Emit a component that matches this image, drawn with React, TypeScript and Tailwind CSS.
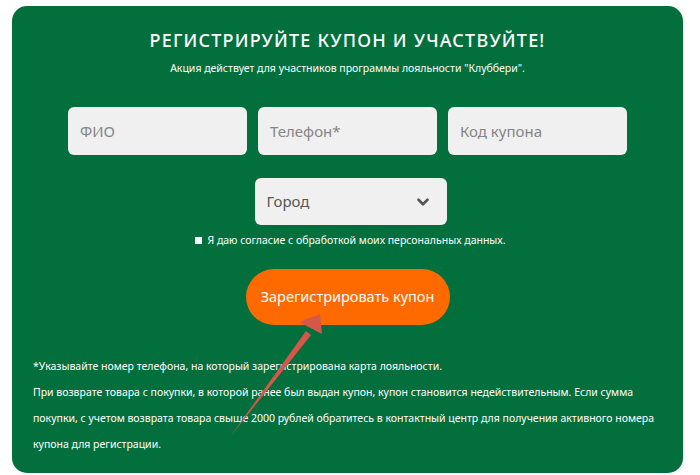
import { ChevronDown } from 'lucide-react';

const fields = ['ФИО', 'Телефон*', 'Код купона'];

export default function App() {
  return (
    <div className="w-[700px] h-[475px] bg-white px-3 pt-[6px] font-['Noto_Sans',sans-serif] relative overflow-hidden">
      <div className="bg-[#026f3d] rounded-[15px] min-h-[463px] w-[671px] flex flex-col items-center pt-[21px] pb-4 text-white">
        <h1 className="text-[18px] font-medium tracking-[1.2px] leading-[26px]">РЕГИСТРИРУЙТЕ КУПОН И УЧАСТВУЙТЕ!</h1>
        <p className="text-[10.5px] mt-[8px] leading-[14px]">Акция действует для участников программы лояльности "Клуббери".</p>

        <div className="flex gap-[11px] mt-[32px]">
          {fields.map(f => (
            <div
              key={f}
              className="w-[179px] h-[48px] bg-[#f0f0f0] rounded-[6px] flex items-center pl-[12px] text-[15px] text-[#858585]"
            >
              {f}
            </div>
          ))}
        </div>

        <div className="w-[192px] h-[47px] bg-[#f0f0f0] rounded-[6px] mt-[23px] ml-[6px] flex items-center justify-between pl-[12px] pr-[15px] text-[15px] text-[#555]">
          <span>Город</span>
          <ChevronDown size={18} strokeWidth={3.5} className="text-[#555]" />
        </div>

        <label className="flex items-center gap-[5px] mt-[8px] ml-[6px] text-[10.5px] leading-[14px]">
          <span className="w-[7px] h-[7px] bg-white inline-block" />
          Я даю согласие с обработкой моих персональных данных.
        </label>

        <button className="mt-[22px] w-[204px] h-[56px] rounded-full bg-[#ff6a00] text-white text-[14.5px]">
          Зарегистрировать купон
        </button>

        <div className="self-stretch px-[21px] mt-[28px] text-[10.5px] leading-[26px] text-white">
          <p>*Указывайте номер телефона, на который зарегистрирована карта лояльности.</p>
          <p>
            При возврате товара с покупки, в которой ранее был выдан купон, купон становится недействительным. Если сумма
            <br />
            покупки, с учетом возврата товара свыше 2000 рублей обратитесь в контактный центр для получения активного номера
            <br />
            купона для регистрации.
          </p>
        </div>
      </div>

      {/* annotation arrow */}
      <svg className="absolute left-0 top-0 pointer-events-none" width="700" height="475">
        <polygon points="230,437 306,331 311,335" fill="#d5574b" />
        <polygon points="320,314 299,322 322,334" fill="#d5574b" />
      </svg>
    </div>
  );
}
